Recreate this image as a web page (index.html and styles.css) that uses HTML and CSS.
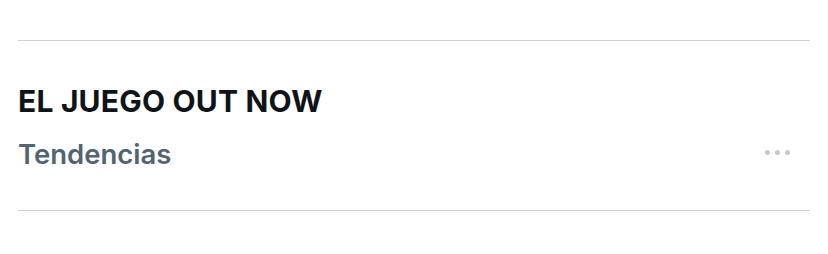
FILE: index.html
```html
<!DOCTYPE html>
<html lang="es">
<head>
    <meta charset="UTF-8">
    <title>Tendencia</title>
    <link rel="stylesheet" href="styles.css">
</head>
<body>
    <div class="trend">
        <div class="trend-body">
            <div class="trend-title">EL JUEGO OUT NOW</div>
            <div class="trend-meta">
                <span class="trend-label">Tendencias</span>
                <span class="trend-more"><i></i><i></i><i></i></span>
            </div>
        </div>
    </div>
</body>
</html>
```

FILE: styles.css
```css
* {
    margin: 0;
    padding: 0;
    box-sizing: border-box;
}

body {
    background: #fff;
    font-family: Inter, "Liberation Sans", sans-serif;
    padding: 40px 18px 0 18px;
}

.trend {
    border-top: 1px solid #cfd3d6;
    border-bottom: 1px solid #cfd3d6;
    height: 171px;
}

.trend-body {
    padding: 42px 0 0 0;
}

.trend-title {
    font-size: 30px;
    font-weight: 700;
    color: #0f1419;
    line-height: 36px;
    letter-spacing: 0.2px;
}

.trend-meta {
    display: flex;
    align-items: center;
    justify-content: space-between;
    margin-top: 18px;
}

.trend-label {
    font-size: 27.5px;
    font-weight: 600;
    color: #536471;
    line-height: 34px;
}

.trend-more {
    display: flex;
    gap: 5px;
    margin-right: 20px;
    margin-bottom: 4px;
}

.trend-more i {
    width: 5px;
    height: 5px;
    border-radius: 50%;
    background: #c4c9ce;
}
```
